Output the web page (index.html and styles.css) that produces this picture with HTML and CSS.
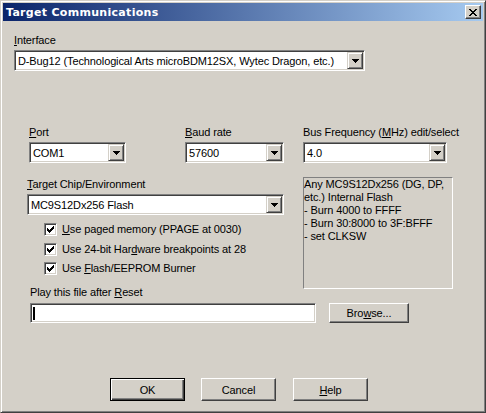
FILE: index.html
```html
<!DOCTYPE html>
<html>
<head>
<meta charset="utf-8">
<title>Target Communications</title>
<link rel="stylesheet" href="styles.css">
</head>
<body>
<div class="window">
  <div class="titlebar">
    <span class="title">Target Communications</span>
    <span class="close"><svg class="xglyph" width="8" height="7" viewBox="0 0 8 7" shape-rendering="crispEdges"><path fill="#000" d="M0 0h2v1h-2z M6 0h2v1h-2z M1 1h2v1h-2z M5 1h2v1h-2z M2 2h4v1h-4z M3 3h2v1h-2z M2 4h4v1h-4z M1 5h2v1h-2z M5 5h2v1h-2z M0 6h2v1h-2z M6 6h2v1h-2z"/></svg></span>
  </div>

  <div class="iface">
    <div class="lbl"><u>I</u>nterface</div>
    <div class="combo w-iface">
      <span class="combo-text">D-Bug12 (Technological Arts microBDM12SX, Wytec Dragon, etc.)</span>
      <span class="dd"><svg width="7" height="4" viewBox="0 0 7 4" shape-rendering="crispEdges"><path fill="#000" d="M0 0h7v1h-7z M1 1h5v1h-5z M2 2h3v1h-3z M3 3h1v1h-1z"/></svg></span>
    </div>
  </div>

  <div class="row3">
    <div class="field f-port">
      <div class="lbl"><u>P</u>ort</div>
      <div class="combo">
        <span class="combo-text">COM1</span>
        <span class="dd"><svg width="7" height="4" viewBox="0 0 7 4" shape-rendering="crispEdges"><path fill="#000" d="M0 0h7v1h-7z M1 1h5v1h-5z M2 2h3v1h-3z M3 3h1v1h-1z"/></svg></span>
      </div>
    </div>
    <div class="field f-baud">
      <div class="lbl"><u>B</u>aud rate</div>
      <div class="combo">
        <span class="combo-text">57600</span>
        <span class="dd"><svg width="7" height="4" viewBox="0 0 7 4" shape-rendering="crispEdges"><path fill="#000" d="M0 0h7v1h-7z M1 1h5v1h-5z M2 2h3v1h-3z M3 3h1v1h-1z"/></svg></span>
      </div>
    </div>
    <div class="field f-bus">
      <div class="lbl">Bus Frequency (<u>M</u>Hz) edit/select</div>
      <div class="combo">
        <span class="combo-text">4.0</span>
        <span class="dd"><svg width="7" height="4" viewBox="0 0 7 4" shape-rendering="crispEdges"><path fill="#000" d="M0 0h7v1h-7z M1 1h5v1h-5z M2 2h3v1h-3z M3 3h1v1h-1z"/></svg></span>
      </div>
    </div>
  </div>

  <div class="middle">
    <div class="leftcol">
      <div class="lbl lbl-target"><u>T</u>arget Chip/Environment</div>
      <div class="combo">
        <span class="combo-text">MC9S12Dx256 Flash</span>
        <span class="dd"><svg width="7" height="4" viewBox="0 0 7 4" shape-rendering="crispEdges"><path fill="#000" d="M0 0h7v1h-7z M1 1h5v1h-5z M2 2h3v1h-3z M3 3h1v1h-1z"/></svg></span>
      </div>
      <div class="checks">
        <div class="check c1">
          <span class="cb"><svg width="7" height="7" viewBox="0 0 7 7" shape-rendering="crispEdges"><path fill="#000" d="M6 0h1v1h-1z M5 1h2v1h-2z M0 2h1v1h-1z M4 2h3v1h-3z M0 3h2v1h-2z M3 3h3v1h-3z M0 4h5v1h-5z M1 5h3v1h-3z M2 6h1v1h-1z"/></svg></span>
          <span class="check-text"><u>U</u>se paged memory (PPAGE at 0030)</span>
        </div>
        <div class="check c2">
          <span class="cb"><svg width="7" height="7" viewBox="0 0 7 7" shape-rendering="crispEdges"><path fill="#000" d="M6 0h1v1h-1z M5 1h2v1h-2z M0 2h1v1h-1z M4 2h3v1h-3z M0 3h2v1h-2z M3 3h3v1h-3z M0 4h5v1h-5z M1 5h3v1h-3z M2 6h1v1h-1z"/></svg></span>
          <span class="check-text">Use 24-bit Har<u>d</u>ware breakpoints at 28</span>
        </div>
        <div class="check c3">
          <span class="cb"><svg width="7" height="7" viewBox="0 0 7 7" shape-rendering="crispEdges"><path fill="#000" d="M6 0h1v1h-1z M5 1h2v1h-2z M0 2h1v1h-1z M4 2h3v1h-3z M0 3h2v1h-2z M3 3h3v1h-3z M0 4h5v1h-5z M1 5h3v1h-3z M2 6h1v1h-1z"/></svg></span>
          <span class="check-text">Use <u>F</u>lash/EEPROM Burner</span>
        </div>
      </div>
      <div class="lbl lbl-play">Play this file after <u>R</u>eset</div>
    </div>
    <div class="desc">Any MC9S12Dx256 (DG, DP,<br>etc.) Internal Flash<br>- Burn 4000 to FFFF<br>- Burn 30:8000 to 3F:BFFF<br>- set CLKSW</div>
  </div>

  <div class="filerow">
    <div class="textbox"><span class="caret"></span></div>
    <div class="btn btn-browse">Bro<u>w</u>se...</div>
  </div>

  <div class="buttons">
    <div class="btn btn-default">OK</div>
    <div class="btn btn-cancel">Cancel</div>
    <div class="btn btn-help"><u>H</u>elp</div>
  </div>
</div>
</body>
</html>
```

FILE: styles.css
```css
* { box-sizing: border-box; }
html, body { margin: 0; padding: 0; }
body {
  background: #d4d0c8;
  font-family: "Liberation Sans", Arial, sans-serif;
  font-size: 11px;
  letter-spacing: -0.12px;
  color: #000;
}
u { text-decoration: underline; text-underline-offset: 1px; }

.window {
  width: 486px;
  height: 413px;
  overflow: hidden;
  background: #d4d0c8;
  border: 1px solid;
  border-color: #d4d0c8 #404040 #404040 #d4d0c8;
  box-shadow: inset 1px 1px #fff, inset -1px -1px #808080;
  padding: 2px;
  display: flex;
  flex-direction: column;
}

.titlebar {
  height: 18px;
  flex: none;
  background: linear-gradient(to right, #0a246a, #a6caf0);
  display: flex;
  align-items: flex-start;
  justify-content: space-between;
  padding: 0 2px 0 3px;
}
.title {
  color: #fff;
  font-family: "DejaVu Sans", Verdana, sans-serif;
  font-weight: bold;
  font-size: 11px;
  letter-spacing: 0.3px;
  line-height: 16px;
  padding-top: 2px;
  white-space: nowrap;
}
.close {
  margin-top: 2px;
  width: 16px;
  height: 14px;
  background: #d4d0c8;
  border: 1px solid;
  border-color: #fff #404040 #404040 #fff;
  box-shadow: inset -1px -1px #808080;
  display: block;
}
.xglyph { display: block; margin: 3px 0 0 3px; }

.lbl { line-height: 13px; height: 13px; white-space: nowrap; }

.combo {
  display: flex;
  height: 21px;
  padding: 1px;
  background: #fff;
  border: 1px solid;
  border-color: #808080 #fff #fff #808080;
  box-shadow: inset 1px 1px #404040, inset -1px -1px #d4d0c8;
  margin-top: 3px;
}
.combo-text {
  flex: 1;
  min-width: 0;
  padding: 1px 0 0 2px;
  line-height: 16px;
  white-space: nowrap;
  overflow: hidden;
}
.dd {
  flex: none;
  width: 16px;
  height: 17px;
  background: #d4d0c8;
  border: 1px solid;
  border-color: #d4d0c8 #404040 #404040 #d4d0c8;
  box-shadow: inset 1px 1px #fff, inset -1px -1px #808080;
  display: flex;
  align-items: center;
  justify-content: center;
}
.dd svg { display: block; }

.iface { margin: 13px 0 0 11px; width: 351px; }

.row3 { display: flex; margin: 55px 0 0 26px; }
.f-port { width: 97px; }
.f-baud { width: 99px; margin-left: 59px; }
.f-bus { width: 144px; margin-left: 19px; }

.middle {
  display: grid;
  grid-template-columns: 257px 150px;
  column-gap: 19px;
  align-items: start;
  margin: 14px 0 0 24px;
}
.lbl-target { margin-top: 1px; }
.checks { margin: 8px 0 0 17px; }
.check { display: flex; align-items: center; height: 13px; }
.c2 { margin-top: 7px; }
.c3 { margin-top: 6px; }
.cb {
  flex: none;
  width: 13px;
  height: 13px;
  padding: 2px;
  background: #fff;
  border: 1px solid;
  border-color: #808080 #fff #fff #808080;
  box-shadow: inset 1px 1px #404040, inset -1px -1px #d4d0c8;
}
.cb svg { display: block; }
.check-text { margin-left: 5px; line-height: 13px; white-space: nowrap; }
.lbl-play { margin: 11px 0 0 3px; }

.desc {
  height: 112px;
  border: 1px solid;
  border-color: #808080 #fff #fff #808080;
  line-height: 13px;
  white-space: nowrap;
  overflow: hidden;
}

.filerow { display: flex; margin: 4px 0 0 27px; }
.textbox {
  width: 286px;
  height: 20px;
  background: #fff;
  border: 1px solid;
  border-color: #808080 #fff #fff #808080;
  box-shadow: inset 1px 1px #404040, inset -1px -1px #d4d0c8;
  padding: 2px 0 0 2px;
}
.caret { display: block; width: 2px; height: 13px; margin-top: 1px; background: #000; }

.btn {
  width: 75px;
  height: 23px;
  background: #d4d0c8;
  border: 1px solid;
  border-color: #fff #404040 #404040 #fff;
  box-shadow: inset -1px -1px #808080;
  display: flex;
  align-items: center;
  justify-content: center;
  white-space: nowrap;
}
.btn-browse { width: 80px; height: 20px; margin-left: 13px; }
.btn-default {
  border-color: #000;
  box-shadow: inset 1px 1px #fff, inset -1px -1px #404040, inset -2px -2px #808080;
}
.buttons { display: flex; margin: 55px 0 0 107px; }
.btn-cancel { margin-left: 16px; }
.btn-help { margin-left: 17px; }
```
